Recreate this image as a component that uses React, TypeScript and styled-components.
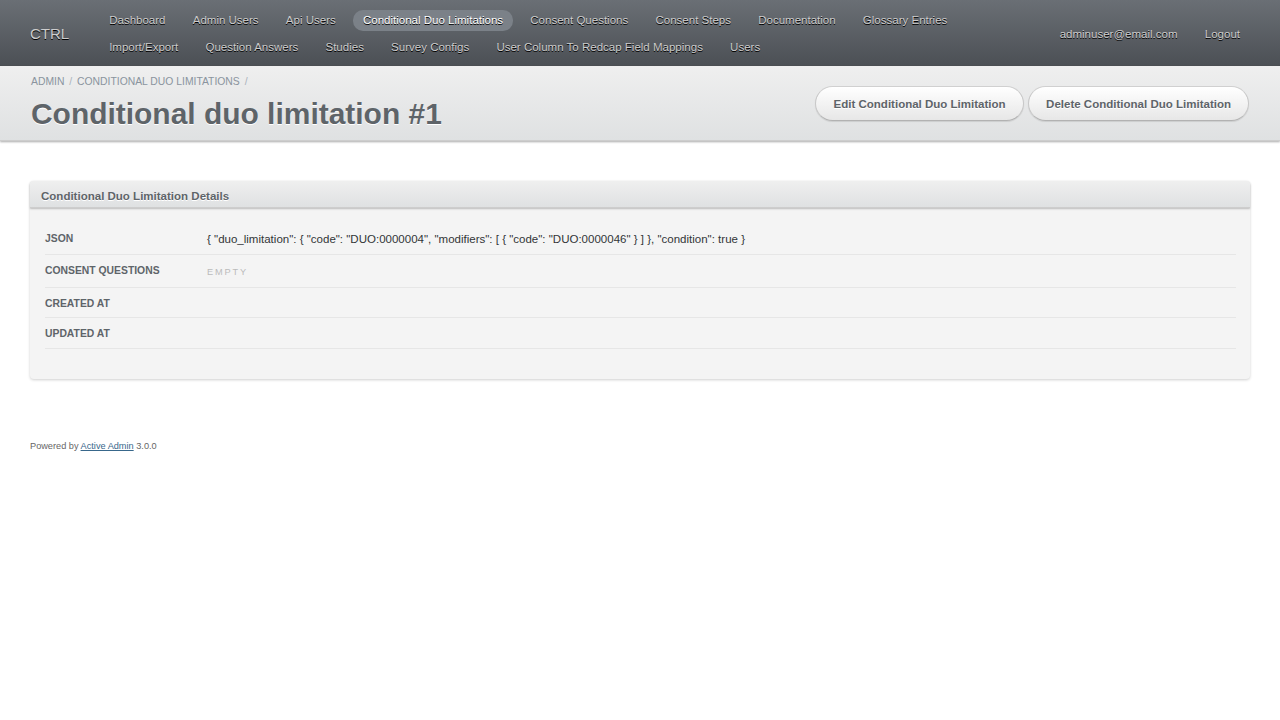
import React from "react";
import styled, { createGlobalStyle } from "styled-components";

const Global = createGlobalStyle`
  html, body { margin: 0; padding: 0; background: #fff; }
  body {
    font-family: "Liberation Sans", Arial, Helvetica, sans-serif;
    font-size: 11.52px;
    line-height: 1.5;
    color: #323537;
  }
  * { box-sizing: border-box; }
`;

const Header = styled.div`
  display: flex;
  align-items: center;
  min-height: 66px;
  padding: 10px 30px 7px;
  background: linear-gradient(180deg, #6a6f75 0%, #4c5055 100%);
  border-bottom: 1px solid #44484c;
`;

const SiteTitle = styled.h1`
  margin: 0;
  padding-right: 30px;
  font-size: 15px;
  font-weight: normal;
  line-height: 20px;
  color: #cdcdcd;
  text-shadow: #000 0 1px 0;
`;

const Menu = styled.ul`
  flex: 1;
  display: flex;
  flex-wrap: wrap;
  column-gap: 7.2px;
  row-gap: 6px;
  margin: 0;
  padding: 0;
  list-style: none;
`;

const Tab = styled.li<{ $current?: boolean }>`
  display: block;
  padding: 2px 10px 3px;
  line-height: 16px;
  border-radius: 10px;
  color: ${(p) => (p.$current ? "#fff" : "#cdcdcd")};
  background: ${(p) => (p.$current ? "#7b8188" : "transparent")};
  text-shadow: #000 0 1px 0;
  white-space: nowrap;
  cursor: pointer;
`;

const Utility = styled.ul`
  display: flex;
  column-gap: 7.2px;
  margin: 0;
  padding: 0;
  list-style: none;
`;

const TitleBar = styled.div`
  display: flex;
  align-items: center;
  justify-content: space-between;
  padding: 9px 30px 9px 31px;
  background: linear-gradient(180deg, #efefef 0%, #dfe1e2 100%);
  border-bottom: 1px solid #cdcdcd;
  box-shadow: 0 1px 2px #aaa;
`;

const TitleLeft = styled.div`
  display: flex;
  flex-direction: column;
`;

const Breadcrumb = styled.div`
  font-size: 10.37px;
  line-height: 14px;
  color: #8a949e;
  text-transform: uppercase;
`;

const Sep = styled.span`
  margin: 0 2px;
  color: #aab2ba;
`;

const Crumb = styled.span`
  color: #8a949e;
`;

const PageTitle = styled.h2`
  margin: 8px 0 0;
  font-size: 29.95px;
  line-height: 34px;
  font-weight: bold;
  color: #5e6469;
  text-shadow: #fff 0 1px 0;
`;

const Actions = styled.div`
  display: flex;
  gap: 4px;
  padding-right: 1px;
`;

const ActionButton = styled.a`
  display: inline-block;
  padding: 11px 17px 10px 17.5px;
  line-height: 12px;
  font-weight: bold;
  color: #5e6469;
  text-decoration: none;
  white-space: nowrap;
  border: 1px solid #c7c7c7;
  border-color: #d0d0d0 #c7c7c7 #b2b2b2;
  border-radius: 200px;
  background: linear-gradient(180deg, #ffffff 0%, #e7e7e7 100%);
  box-shadow: 0 1px 1px rgba(0, 0, 0, 0.1), inset 0 1px 0 0 rgba(255, 255, 255, 0.8);
  text-shadow: #fff 0 1px 0;
  cursor: pointer;
`;

const Content = styled.div`
  padding: 40px 30px 30px;
`;

const Panel = styled.div`
  background: #f4f4f4;
  border-radius: 4px;
  box-shadow: 0 1px 3px #d0d0d0;
`;

const PanelHeader = styled.h3`
  margin: 0;
  padding: 7px 11px 2px;
  font-size: 11.52px;
  line-height: 17px;
  font-weight: bold;
  color: #5e6469;
  text-shadow: #fff 0 1px 0;
  background: linear-gradient(180deg, #efefef 0%, #dfe1e2 100%);
  border-bottom: 1px solid #cdcdcd;
  border-radius: 4px 4px 0 0;
  box-shadow: 0 1px 2px #bbb;
`;

const PanelContents = styled.div`
  padding: 15px 14px 30px 15px;
`;

const Table = styled.table`
  width: 100%;
  border-collapse: collapse;
`;

const Row = styled.tr`
  border-bottom: 1px solid #e6e6e6;
`;

const Th = styled.th`
  width: 162px;
  padding: 8px 12px 6px 0;
  text-align: left;
  vertical-align: top;
  font-size: 10.37px;
  font-weight: bold;
  color: #5e6469;
  text-transform: uppercase;
`;

const Td = styled.td`
  padding: 8px 12px 6px 0;
  vertical-align: top;
  color: #323537;
`;

const Empty = styled.span`
  color: #bbb;
  font-size: 0.8em;
  letter-spacing: 0.2em;
  text-transform: uppercase;
`;

const Footer = styled.div`
  padding: 31px 30px 30px;
  font-size: 9.2px;
  line-height: 1.5;
  color: #666;
`;

const FooterLink = styled.a`
  color: #38678b;
  text-decoration: underline;
`;

const tabs = [
  "Dashboard",
  "Admin Users",
  "Api Users",
  "Conditional Duo Limitations",
  "Consent Questions",
  "Consent Steps",
  "Documentation",
  "Glossary Entries",
  "Import/Export",
  "Question Answers",
  "Studies",
  "Survey Configs",
  "User Column To Redcap Field Mappings",
  "Users",
];

const rows: { label: string; value?: string; empty?: boolean }[] = [
  {
    label: "Json",
    value:
      '{ "duo_limitation": { "code": "DUO:0000004", "modifiers": [ { "code": "DUO:0000046" } ] }, "condition": true }',
  },
  { label: "Consent Questions", empty: true },
  { label: "Created At" },
  { label: "Updated At" },
];

export default function App() {
  return (
    <>
      <Global />
      <Header>
        <SiteTitle>CTRL</SiteTitle>
        <Menu>
          {tabs.map((t) => (
            <Tab key={t} $current={t === "Conditional Duo Limitations"}>
              {t}
            </Tab>
          ))}
        </Menu>
        <Utility>
          <Tab>adminuser@email.com</Tab>
          <Tab>Logout</Tab>
        </Utility>
      </Header>
      <TitleBar>
        <TitleLeft>
          <Breadcrumb>
            <Crumb>Admin</Crumb> <Sep>/</Sep> <Crumb>Conditional Duo Limitations</Crumb>{" "}
            <Sep>/</Sep>
          </Breadcrumb>
          <PageTitle>Conditional duo limitation #1</PageTitle>
        </TitleLeft>
        <Actions>
          <ActionButton>Edit Conditional Duo Limitation</ActionButton>
          <ActionButton>Delete Conditional Duo Limitation</ActionButton>
        </Actions>
      </TitleBar>
      <Content>
        <Panel>
          <PanelHeader>Conditional Duo Limitation Details</PanelHeader>
          <PanelContents>
            <Table>
              <tbody>
                {rows.map((r) => (
                  <Row key={r.label}>
                    <Th>{r.label}</Th>
                    <Td>{r.empty ? <Empty>Empty</Empty> : r.value}</Td>
                  </Row>
                ))}
              </tbody>
            </Table>
          </PanelContents>
        </Panel>
      </Content>
      <Footer>
        Powered by <FooterLink>Active Admin</FooterLink> 3.0.0
      </Footer>
    </>
  );
}
